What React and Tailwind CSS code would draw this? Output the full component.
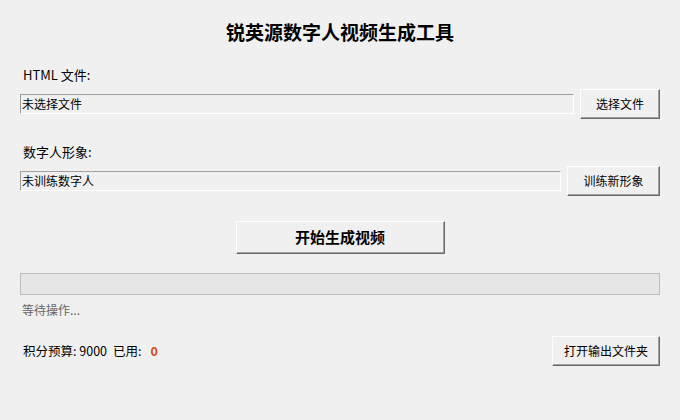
import React from 'react';

const font = { fontFamily: '"Noto Sans CJK SC", "Noto Sans", sans-serif' };

function TkButton({ children, className = '' }) {
  return (
    <button
      className={`flex items-center justify-center bg-[#f0f0f0] border border-t-white border-l-white border-r-[#696969] border-b-[#696969] shadow-[inset_-1px_-1px_0_#a0a0a0] text-[12px] text-black ${className}`}
    >
      {children}
    </button>
  );
}

function Entry({ value, className = '' }) {
  return (
    <div
      className={`h-[20px] flex items-center px-[1px] bg-[#f0f0f0] border border-t-[#a0a0a0] border-l-[#a0a0a0] border-r-white border-b-white text-[12px] leading-none text-black ${className}`}
    >
      {value}
    </div>
  );
}

export default function App() {
  return (
    <div className="w-[680px] h-[420px] bg-[#f0f0f0] px-5 pt-[20px] flex flex-col" style={font}>
      <h1 className="h-6 leading-6 text-center text-[19px] font-bold text-black">
        锐英源数字人视频生成工具
      </h1>

      <div className="mt-[22px] h-[18px] leading-[18px] pl-[3px] text-[13px] text-black">HTML 文件:</div>
      <div className="mt-[5px] flex items-center gap-[6px]">
        <Entry value="未选择文件" className="flex-1" />
        <TkButton className="w-[80px] h-[30px]">选择文件</TkButton>
      </div>

      <div className="mt-[24px] h-[18px] leading-[18px] pl-[3px] text-[13px] text-black">数字人形象:</div>
      <div className="mt-[5px] flex items-center gap-[6px]">
        <Entry value="未训练数字人" className="flex-1" />
        <TkButton className="w-[93px] h-[30px]">训练新形象</TkButton>
      </div>

      <div className="mt-[25px] flex justify-center">
        <TkButton className="w-[209px] h-[33px] text-[15px] font-bold">开始生成视频</TkButton>
      </div>

      <div className="mt-[19px] h-[22px] bg-[#e6e6e6] border border-[#bcbcbc]" />
      <div className="mt-[7px] h-4 leading-4 pl-[2px] text-[12px] text-[#666666]">等待操作...</div>

      <div className="mt-[18px] flex items-center justify-between">
        <div className="flex items-center pl-[3px] text-[12.5px] text-black">
          <span>积分预算: 9000</span>
          <span className="ml-[6px]">已用:</span>
          <span className="ml-[9px] font-bold text-[#d9480f]">0</span>
        </div>
        <TkButton className="w-[108px] h-[30px]">打开输出文件夹</TkButton>
      </div>
    </div>
  );
}
